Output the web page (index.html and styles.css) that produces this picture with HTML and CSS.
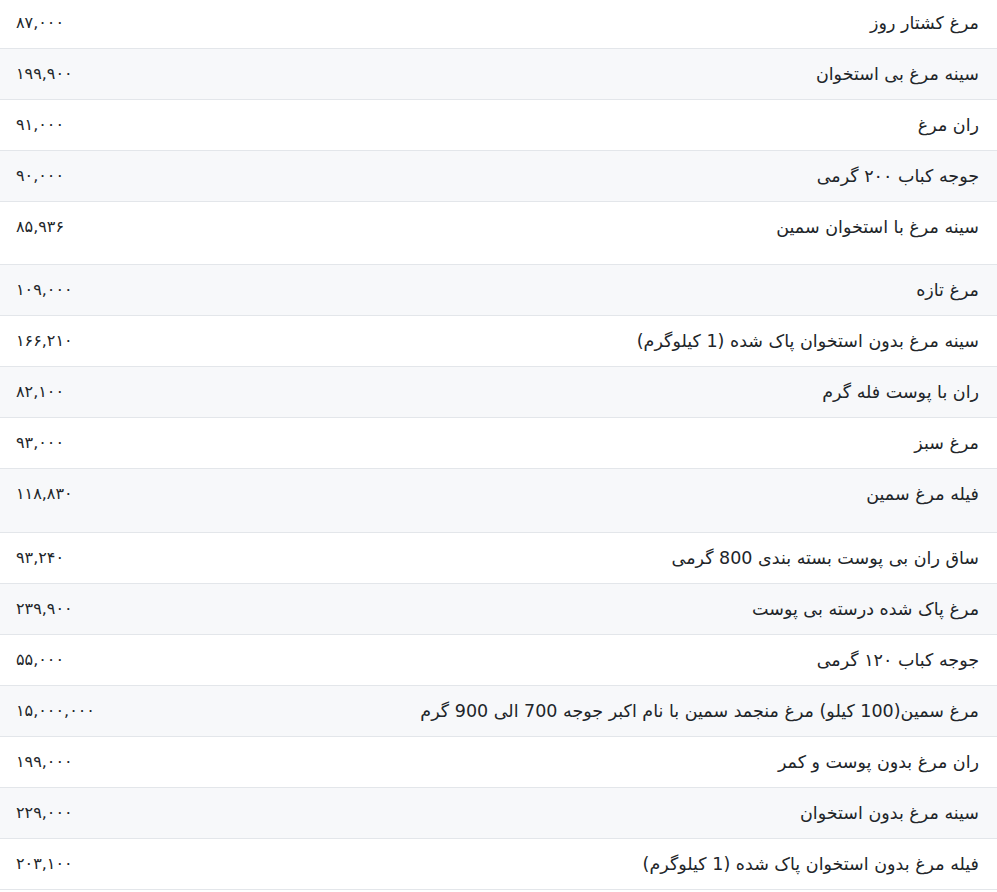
FILE: index.html
```html
<!DOCTYPE html>
<html lang="fa" dir="rtl">
<head>
<meta charset="utf-8">
<title>قیمت مرغ</title>
<link rel="stylesheet" href="styles.css">
</head>
<body>
<table class="prices">
<tbody>
<tr><td class="name">مرغ کشتار روز</td><td class="price">۸۷,۰۰۰</td></tr>
<tr><td class="name">سینه مرغ بی استخوان</td><td class="price">۱۹۹,۹۰۰</td></tr>
<tr><td class="name">ران مرغ</td><td class="price">۹۱,۰۰۰</td></tr>
<tr><td class="name">جوجه کباب ۲۰۰ گرمی</td><td class="price">۹۰,۰۰۰</td></tr>
<tr class="tall tall-a"><td class="name">سینه مرغ با استخوان سمین</td><td class="price">۸۵,۹۳۶</td></tr>
<tr><td class="name">مرغ تازه</td><td class="price">۱۰۹,۰۰۰</td></tr>
<tr><td class="name">سینه مرغ بدون استخوان پاک شده (1 کیلوگرم)</td><td class="price">۱۶۶,۲۱۰</td></tr>
<tr><td class="name">ران با پوست فله گرم</td><td class="price">۸۲,۱۰۰</td></tr>
<tr><td class="name">مرغ سبز</td><td class="price">۹۳,۰۰۰</td></tr>
<tr class="tall"><td class="name">فیله مرغ سمین</td><td class="price">۱۱۸,۸۳۰</td></tr>
<tr><td class="name">ساق ران بی پوست بسته بندی 800 گرمی</td><td class="price">۹۳,۲۴۰</td></tr>
<tr><td class="name">مرغ پاک شده درسته بی پوست</td><td class="price">۲۳۹,۹۰۰</td></tr>
<tr><td class="name">جوجه کباب ۱۲۰ گرمی</td><td class="price">۵۵,۰۰۰</td></tr>
<tr><td class="name">مرغ سمین(100 کیلو) مرغ منجمد سمین با نام اکبر جوجه 700 الی 900 گرم</td><td class="price">۱۵,۰۰۰,۰۰۰</td></tr>
<tr><td class="name">ران مرغ بدون پوست و کمر</td><td class="price">۱۹۹,۰۰۰</td></tr>
<tr><td class="name">سینه مرغ بدون استخوان</td><td class="price">۲۲۹,۰۰۰</td></tr>
<tr><td class="name">فیله مرغ بدون استخوان پاک شده (1 کیلوگرم)</td><td class="price">۲۰۳,۱۰۰</td></tr>
</tbody>
</table>
</body>
</html>
```
FILE: styles.css
```css
html, body {
  margin: 0;
  padding: 0;
  background: #ffffff;
}
body {
  font-family: "DejaVu Sans", sans-serif;
  font-size: 16px;
  color: #212529;
}
.prices {
  width: 100%;
  border-collapse: collapse;
  margin-top: -2px;
}
.prices td {
  padding: 13px 18px 13px 16px;
  line-height: 24px;
  height: 24px;
  vertical-align: top;
  border-bottom: 1px solid #e3e6ea;
}
.prices tr:nth-child(even) td {
  background: #f7f8fa;
}
.prices .name {
  text-align: right;
  font-size: 17.5px;
}
.prices .price {
  text-align: left;
  white-space: nowrap;
  font-size: 16px;
}
.prices tr.tall td {
  padding-bottom: 26px;
}
.prices tr.tall-a td {
  padding-bottom: 25px;
}
```
